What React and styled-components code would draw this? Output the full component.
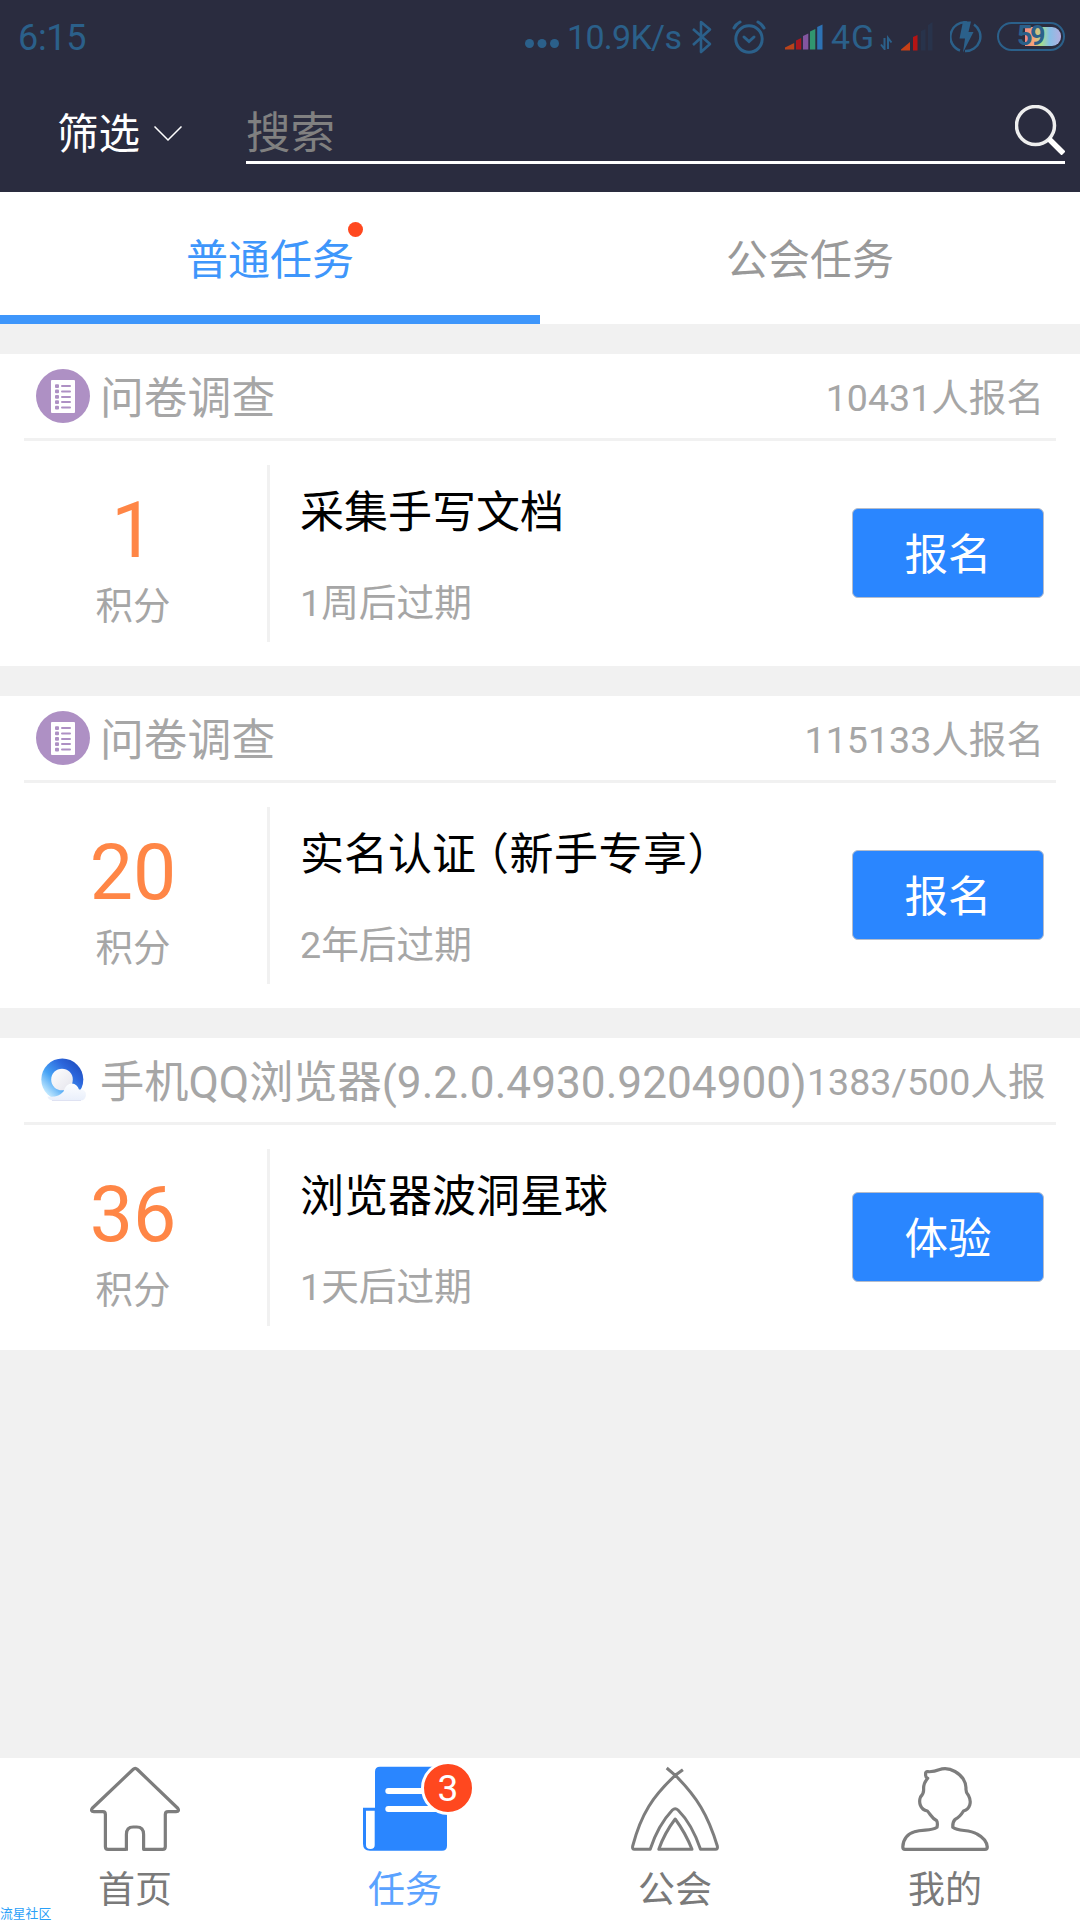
import React from "react";
import styled, { createGlobalStyle } from "styled-components";

const GlobalStyle = createGlobalStyle`
  * { box-sizing: border-box; }
  body {
    margin: 0;
    background: #f1f1f1;
    font-family: Roboto, "Noto Sans CJK SC", sans-serif;
  }
`;

const Screen = styled.div`
  width: 1080px;
  height: 1920px;
  display: flex;
  flex-direction: column;
  background: #f1f1f1;
  overflow: hidden;
`;

const Header = styled.header`
  height: 192px;
  flex: none;
  background: #2a2c3f;
  display: flex;
  flex-direction: column;
`;

const StatusBar = styled.div`
  height: 74px;
  display: flex;
  align-items: center;
  padding: 0 15px 0 18px;
  color: #2b608a;
`;

const Clock = styled.span`
  font-size: 36px;
  line-height: 40px;
  flex: 1;
  padding-top: 1px;
  letter-spacing: -0.3px;
`;

const StatusText = styled.span`
  font-size: 34px;
  line-height: 40px;
  width: ${(p) => p.$width}px;
  margin-left: ${(p) => p.$gap}px;
  letter-spacing: ${(p) => p.$track || 0}px;
  white-space: nowrap;
`;

const StatusIcon = styled.svg`
  display: block;
  flex: none;
  margin-left: ${(p) => p.$gap}px;
`;

const Battery = styled.div`
  position: relative;
  width: 68px;
  height: 29px;
  margin: 0 0 1px 15px;
  border: 2px solid #2b608a;
  border-radius: 15px;
  padding: 3px 2px 3px 26px;
  display: flex;
`;

const BatteryFill = styled.div`
  flex: 1;
  border-radius: 0 9px 9px 0;
  background: linear-gradient(90deg, #f08a80 0, #f7a878 25%, #a6dc8c 45%, #86bfe6 68%, #b3aee0 100%);
`;

const BatteryLevel = styled.span`
  position: absolute;
  left: 18px;
  top: 0;
  font-size: 27px;
  line-height: 25px;
  font-weight: 700;
  letter-spacing: -2.5px;
`;

const SearchBar = styled.div`
  display: flex;
  align-items: flex-start;
  height: 118px;
  padding: 24px 15px 0 57px;
`;

const Filter = styled.div`
  display: flex;
  align-items: center;
  width: 189px;
  height: 70px;
  color: #fff;
  font-size: 41.5px;
  line-height: 70px;
  svg { margin: 2px 0 0 14px; }
`;

const FilterLabel = styled.span`
  padding-top: 3px;
`;

const SearchField = styled.div`
  flex: 1;
  height: 66px;
  border-bottom: 3px solid #fff;
  display: flex;
  justify-content: space-between;
  color: #808080;
  font-size: 44.5px;
  line-height: 72px;
  svg { margin-top: 7px; }
`;

const Tabs = styled.nav`
  display: flex;
  flex: none;
  height: 132px;
  background: #fff;
`;

const Tab = styled.div`
  flex: 1;
  display: flex;
  justify-content: center;
  font-size: 42px;
  line-height: 137px;
  color: ${(p) => (p.$active ? "#3e96fb" : "#999")};
  border-bottom: 9px solid ${(p) => (p.$active ? "#3e96fb" : "#fff")};
`;

const TabLabel = styled.span`
  position: relative;
`;

const Dot = styled.i`
  position: absolute;
  top: 30px;
  right: -9px;
  width: 15px;
  height: 15px;
  border-radius: 50%;
  background: #ff481f;
`;

const TaskList = styled.main`
  flex: 1;
  display: flex;
  flex-direction: column;
  gap: 30px;
  padding-top: 30px;
`;

const Card = styled.section`
  height: 312px;
  background: #fff;
  padding: 0 24px;
`;

const CardHead = styled.div`
  height: 87px;
  border-bottom: 3px solid #f1f1f1;
  display: flex;
  align-items: center;
  padding: 0 12px;
  color: #a6a6a6;
  svg { flex: none; }
`;

const Category = styled.span`
  font-size: ${(p) => (p.$fixed ? 44.2 : 43.8)}px;
  line-height: 60px;
  margin: 5px 0 0 10px;
  white-space: nowrap;
  flex: none;
  width: ${(p) => (p.$fixed ? p.$fixed + "px" : "auto")};
`;

const Count = styled.span`
  flex: 1;
  text-align: ${(p) => (p.$full ? "left" : "right")};
  font-size: 37.6px;
  line-height: 60px;
  margin-top: 4px;
  white-space: nowrap;
`;

const CardBody = styled.div`
  display: flex;
  align-items: center;
  height: 225px;
  padding-right: 12px;
`;

const Score = styled.div`
  width: 246px;
  height: 177px;
  border-right: 3px solid #f1f1f1;
  padding: 24px 25px 0 0;
  display: flex;
  flex-direction: column;
  align-items: center;
  gap: 9px;
  color: #a6a6a6;
  font-size: 37.5px;
  line-height: 48px;
`;

const Points = styled.strong`
  font-size: 77px;
  line-height: 84px;
  font-weight: 400;
  color: #ff8646;
`;

const Info = styled.div`
  flex: 1;
  height: 177px;
  padding: 18px 0 0 30px;
  display: flex;
  flex-direction: column;
`;

const Title = styled.h2`
  margin: 0 0 35px;
  font-size: 44px;
  line-height: 60px;
  font-weight: 400;
  color: #000;
  white-space: nowrap;
`;

const Tight = styled.span`
  margin-left: -11px;
  letter-spacing: 0.5px;
`;

const Expiry = styled.span`
  font-size: 37.7px;
  line-height: 50px;
  color: #a6a6a6;
`;

const Action = styled.button`
  width: 192px;
  height: 90px;
  margin-bottom: 2px;
  padding: 5px 0 0;
  border: 1px solid #b4bccb;
  border-radius: 6px;
  background: #2a86ff;
  color: #fff;
  font-family: inherit;
  font-size: 43.5px;
  line-height: 83px;
`;

const BottomNav = styled.footer`
  position: relative;
  flex: none;
  height: 162px;
  background: #fff;
  display: flex;
`;

const NavItem = styled.div`
  flex: 1;
  display: flex;
  flex-direction: column;
  align-items: center;
  padding-top: 6px;
  font-size: 37px;
  line-height: 48px;
  color: ${(p) => (p.$active ? "#5aa2ff" : "#7a7a7a")};
`;

const IconBox = styled.div`
  position: relative;
  width: 90px;
  height: 90px;
  margin-bottom: 13px;
`;

const Badge = styled.span`
  position: absolute;
  left: 61px;
  top: -3px;
  width: 54px;
  height: 54px;
  border: 3px solid #fff;
  border-radius: 50%;
  background: #ff481f;
  color: #fff;
  font-size: 37px;
  line-height: 50px;
  text-align: center;
`;

const Watermark = styled.span`
  position: absolute;
  left: 0;
  bottom: 0;
  font-size: 12.8px;
  line-height: 13px;
  color: #2aa0f8;
`;

const SurveyIcon = () => (
  <svg width="54" height="54" viewBox="0 0 54 54">
    <circle cx="27" cy="27" r="27" fill="#ae90c4" />
    <rect x="15" y="11" width="24" height="33" rx="1" fill="#fff" />
    {[17, 22.3, 27.8, 33, 38.5].map((y) => (
      <g key={y} fill="#ae90c4">
        <rect x="19" y={y - 1.8} width="4" height="3.8" rx="1" />
        <rect x="25" y={y - 0.9} width="10" height="2" rx="1" />
      </g>
    ))}
  </svg>
);

const BrowserIcon = () => (
  <svg width="54" height="54" viewBox="0 0 54 54">
    <defs>
      <linearGradient id="ring" x1="0.15" y1="0.9" x2="0.85" y2="0.2">
        <stop offset="0" stopColor="#cdefff" />
        <stop offset="0.4" stopColor="#46a3f5" />
        <stop offset="0.8" stopColor="#2c66dc" />
        <stop offset="1" stopColor="#2456c8" />
      </linearGradient>
      <linearGradient id="core" x1="0" y1="0" x2="1" y2="1">
        <stop offset="0" stopColor="#fff" />
        <stop offset="1" stopColor="#e4e4ec" />
      </linearGradient>
      <linearGradient id="cloud" x1="0" y1="0" x2="0" y2="1">
        <stop offset="0" stopColor="#fdfeff" />
        <stop offset="1" stopColor="#e9effb" />
      </linearGradient>
    </defs>
    <circle cx="26.3" cy="26.500" r="21" fill="url(#ring)" />
    <circle cx="26" cy="26.500" r="10.8" fill="url(#core)" />
    <path d="M17 47.500Q12 47 11.500 43.500Q22 45 27.500 38.500Q30 30.500 36 30.500Q41 31 43 36.500Q50 36 50 42Q49.500 47.500 44 47.500Z" fill="url(#cloud)" />
    <path d="M16 47.500H45" stroke="#dfe2f2" strokeWidth="1" />
  </svg>
);

const line = { fill: "none", stroke: "#7d7d7d", strokeWidth: 3.2, strokeLinejoin: "round" };

const HomeIcon = () => (
  <svg width="90" height="90" viewBox="0 0 90 90" {...line}>
    <path d="M36.400 86.700V85.300H18Q15.400 85.300 15.400 82.700V50.500Q15.400 47.700 12.800 47.700H4Q0 47.500 2.500 44L43 5.500Q45.200 3.300 47.400 5.500L87.500 44Q90 47.500 86 47.700H78.200Q75.300 47.700 75.300 50.500V82.700Q75.300 85.300 72.700 85.300H53.600V70.500Q53.600 63 46.800 63H43.200Q36.400 63 36.400 70.500V86" />
  </svg>
);

const TaskIcon = () => (
  <svg width="90" height="90" viewBox="0 0 90 90">
    <path d="M20 2.700H82Q87 2.700 87 7.700V81.700Q87 86.700 82 86.700H10Q3 86.700 3 79.700V43.700H15V7.700Q15 2.700 20 2.700Z" fill="#2a86ff" />
    <path d="M6 46.700H14.700V81Q14.700 85 10.400 85Q6 85 6 81Z" fill="#fff" />
    <path d="M28.300 27H66M28.300 45H77" stroke="#fff" strokeWidth="6" strokeLinecap="round" />
  </svg>
);

const GuildIcon = () => (
  <svg width="90" height="90" viewBox="0 0 90 90" {...line} strokeWidth="3">
    <path d="M36.700 4L45.300 11.300C67 33 78 51 87.300 82Q88 85.300 85.500 85.300H70.500C66 72 59 57 48 46Q45.200 43.500 42.400 46C32 57 24.500 72 20.200 85.300H4.500Q2 85.300 2.700 82C11 50 23 32 45.300 11.300L52.900 5.700" />
    <path d="M45.200 55Q34.500 69 28.800 85.300H62Q55.500 69 45.200 55Z" />
  </svg>
);

const MineIcon = () => (
  <svg width="90" height="90" viewBox="0 0 90 90" {...line}>
    <path d="M25.700 10.300Q25 7.500 28 7.700Q34 8 39 5.800Q47 3 55 7.500Q65.500 13.500 66 24Q65.500 28.500 68.500 31.500C72 38 70 45 63.500 47C60.500 52 59 53.500 55 55.500Q52.500 58 52.800 63.300C59 68 69 65 77 70Q86.500 75 87.300 83Q87.300 85.300 85 85.300H5Q2.800 85.300 2.800 83C3 75 8 69.500 14.500 67.800C23 65 31 67.500 37 63.300Q38 58.500 36.500 56.500C32 54.500 31 51 27.400 47C20 45.500 18.500 38 20.500 33Q24 29.500 23.600 25Q23.300 19.500 27.700 14.300Q25 12.500 25.700 10.300Z" />
  </svg>
);

const tasks = [
  { icon: <SurveyIcon />, category: "问卷调查", count: "10431人报名", points: 1, title: "采集手写文档", expiry: "1周后过期", action: "报名" },
  { icon: <SurveyIcon />, category: "问卷调查", count: "115133人报名", points: 20, title: "实名认证", note: "（新手专享）", expiry: "2年后过期", action: "报名" },
  { icon: <BrowserIcon />, category: "手机QQ浏览器(9.2.0.4930.9204900)", count: "1383/500人报", full: true, points: 36, title: "浏览器波洞星球", expiry: "1天后过期", action: "体验" },
];

const navItems = [
  { label: "首页", icon: <HomeIcon /> },
  { label: "任务", icon: <TaskIcon />, active: true, badge: 3 },
  { label: "公会", icon: <GuildIcon /> },
  { label: "我的", icon: <MineIcon /> },
];

const Status = () => (
  <StatusBar>
    <Clock>6:15</Clock>
    <StatusIcon width="34" height="40" viewBox="0 0 34 40" fill="#2b608a" $gap={0}>
      <circle cx="4.500" cy="26.500" r="4.500" />
      <circle cx="17" cy="26.500" r="4.500" />
      <circle cx="29.500" cy="26.500" r="4.500" />
    </StatusIcon>
    <StatusText $width={116} $gap={8} $track={-0.7}>10.9K/s</StatusText>
    <StatusIcon width="20" height="36" viewBox="0 0 20 36" fill="none" stroke="#2b608a" strokeWidth="2.600" strokeLinejoin="round" $gap={9}>
      <path d="M1 10L18 25L9 33V3L18 10.500L1 26" />
    </StatusIcon>
    <StatusIcon width="34" height="36" viewBox="0 0 34 36" fill="none" stroke="#2b608a" strokeWidth="3" strokeLinecap="round" $gap={20}>
      <circle cx="17" cy="20" r="13.200" />
      <path d="M2 9Q4 5 8 3M32 9Q30 5 26 3" />
      <path d="M12 18L17 22.500L22 18" />
    </StatusIcon>
    <StatusIcon width="38" height="28" viewBox="0 0 38 28" $gap={19}>
      <path d="M0 26.500V24.500L9.200 20V26.500Z" fill="#b9431b" />
      <path d="M11 26.500V17.500L16.200 15V26.500Z" fill="#a81820" />
      <path d="M18 26.500V13L23.300 10.500V26.500Z" fill="#83559f" />
      <path d="M25 26.500V8.500L30.300 6V26.500Z" fill="#31966f" />
      <path d="M32.200 26.500V4L37.500 1.500V26.500Z" fill="#2d72b4" />
    </StatusIcon>
    <StatusText $width={46} $gap={8} $track={1}>4G</StatusText>
    <StatusIcon width="13" height="26" viewBox="0 0 13 26" fill="none" stroke="#2b608a" strokeWidth="2" $gap={3}>
      <path d="M4.500 14V25L1 20.500M8 25V14L11.500 18.500" />
    </StatusIcon>
    <StatusIcon width="32" height="30" viewBox="0 0 32 30" $gap={8}>
      <path d="M0 28.500V27.500L9 20V28.500Z" fill="#c74016" />
      <path d="M12 28.500V15L16.500 13V28.500Z" fill="#b51414" />
      <path d="M20 28.500V9L24.500 7V28.500ZM27 28.500V3L31.500 0V28.500Z" fill="#28334b" />
    </StatusIcon>
    <StatusIcon width="32" height="34" viewBox="0 0 32 34" $gap={17}>
      <path d="M17 2.500A14.500 14.500 0 0 0 10 30.500M15 31A14.500 14.500 0 0 0 24 4.500" fill="none" stroke="#2b608a" strokeWidth="2.500" />
      <path d="M13 1.500L21 1.500L18.500 12H23.500L13 32.500L15 18.500H9.500Z" fill="#2b608a" />
    </StatusIcon>
    <Battery>
      <BatteryFill />
      <BatteryLevel>59</BatteryLevel>
    </Battery>
  </StatusBar>
);

export default function App() {
  return (
    <Screen>
      <GlobalStyle />
      <Header>
        <Status />
        <SearchBar>
          <Filter>
            <FilterLabel>筛选</FilterLabel>
            <svg width="28" height="16" viewBox="0 0 28 16" fill="none" stroke="#fff" strokeWidth="1.500">
              <path d="M0.500 0.500L14 14L27.500 0.500" />
            </svg>
          </Filter>
          <SearchField>
            搜索
            <svg width="50" height="50" viewBox="0 0 50 50" fill="none" stroke="#fff">
              <circle cx="20.500" cy="20.500" r="19" strokeWidth="3.500" stroke="#eee" />
              <path d="M34 34L48.500 48.500" strokeWidth="5.500" />
            </svg>
          </SearchField>
        </SearchBar>
      </Header>
      <Tabs>
        <Tab $active>
          <TabLabel>普通任务<Dot /></TabLabel>
        </Tab>
        <Tab>
          <TabLabel>公会任务</TabLabel>
        </Tab>
      </Tabs>
      <TaskList>
        {tasks.map((t) => (
          <Card key={t.title}>
            <CardHead>
              {t.icon}
              <Category $fixed={t.full ? 707 : 0}>{t.category}</Category>
              <Count $full={t.full}>{t.count}</Count>
            </CardHead>
            <CardBody>
              <Score>
                <Points>{t.points}</Points>
                积分
              </Score>
              <Info>
                <Title>
                  {t.title}
                  {t.note && <Tight>{t.note}</Tight>}
                </Title>
                <Expiry>{t.expiry}</Expiry>
              </Info>
              <Action>{t.action}</Action>
            </CardBody>
          </Card>
        ))}
      </TaskList>
      <BottomNav>
        {navItems.map((n) => (
          <NavItem key={n.label} $active={n.active}>
            <IconBox>
              {n.icon}
              {n.badge && <Badge>{n.badge}</Badge>}
            </IconBox>
            {n.label}
          </NavItem>
        ))}
        <Watermark>流星社区</Watermark>
      </BottomNav>
    </Screen>
  );
}
